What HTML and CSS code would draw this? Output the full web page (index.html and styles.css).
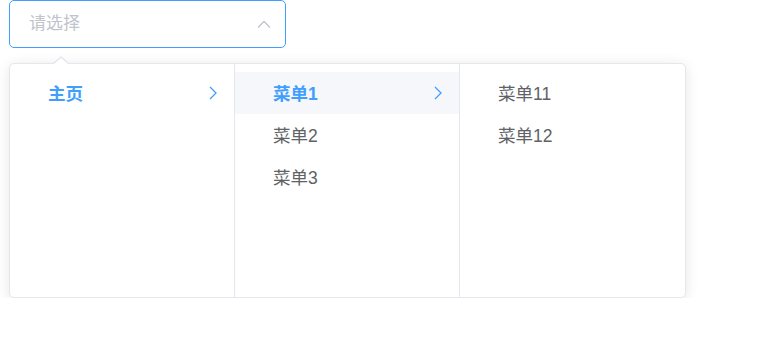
FILE: index.html
```html
<!DOCTYPE html>
<html>
  <head>
    <title>Cascader</title>
    <link rel="stylesheet" href="styles.css">
  </head>
  <body>
    <div class="cascader">
      <div class="input-wrapper">
        <input class="input" placeholder="请选择" readonly />
        <svg class="suffix" width="14" height="8" viewBox="0 0 14 8">
          <path d="M1 7.5 L7 1.5 L13 7.5" fill="none" stroke="#c0c4cc" stroke-width="1.3" />
        </svg>
      </div>

      <div class="dropdown">
        <div class="menu">
          <ul class="menu-list">
            <li class="node active">
              <span class="label">主页</span>
              <svg class="arrow" width="8" height="14" viewBox="0 0 8 14">
                <path d="M1 1 L7 7 L1 13" fill="none" stroke="#409eff" stroke-width="1.3" />
              </svg>
            </li>
          </ul>
        </div>
        <div class="menu">
          <ul class="menu-list">
            <li class="node active hover">
              <span class="label">菜单1</span>
              <svg class="arrow" width="8" height="14" viewBox="0 0 8 14">
                <path d="M1 1 L7 7 L1 13" fill="none" stroke="#409eff" stroke-width="1.3" />
              </svg>
            </li>
            <li class="node"><span class="label">菜单2</span></li>
            <li class="node"><span class="label">菜单3</span></li>
          </ul>
        </div>
        <div class="menu">
          <ul class="menu-list">
            <li class="node"><span class="label">菜单11</span></li>
            <li class="node"><span class="label">菜单12</span></li>
          </ul>
        </div>
      </div>
    </div>
  </body>
</html>
```

FILE: styles.css
```css
body {
  margin: 0;
  background: #ffffff;
  font-family: "Helvetica Neue", "Liberation Sans", "Noto Sans CJK SC", sans-serif;
}

.cascader {
  padding-left: 9px;
}

.input-wrapper {
  position: relative;
  width: 277px;
  height: 48px;
}

.input {
  box-sizing: border-box;
  width: 100%;
  height: 48px;
  padding: 0 40px 0 19px;
  border: 1px solid #409eff;
  border-radius: 5px;
  outline: none;
  font-family: inherit;
  font-size: 17px;
  color: #606266;
  background: #ffffff;
}

.input::placeholder {
  color: #c0c4cc;
}

.suffix {
  position: absolute;
  right: 15px;
  top: 20px;
}

.dropdown {
  position: relative;
  display: flex;
  width: 677px;
  height: 235px;
  margin-top: 15px;
  box-sizing: border-box;
  border: 1px solid #e4e7ed;
  border-radius: 5px;
  background: #ffffff;
  box-shadow: 0 2px 14px 0 rgba(0, 0, 0, 0.1);
}

.dropdown::before,
.dropdown::after {
  content: "";
  position: absolute;
  border-style: solid;
  border-color: transparent;
  border-top: 0;
}

.dropdown::before {
  top: -8px;
  left: 43px;
  border-width: 0 8px 7px 8px;
  border-bottom-color: #e4e7ed;
}

.dropdown::after {
  top: -6px;
  left: 44px;
  border-width: 0 7px 6px 7px;
  border-bottom-color: #ffffff;
}

.menu {
  width: 224px;
  border-right: 1px solid #e4e7ed;
}

.menu:last-child {
  border-right: 0;
  flex: 1;
}

.menu-list {
  list-style: none;
  margin: 0;
  padding: 8px 0;
}

.node {
  display: flex;
  align-items: center;
  box-sizing: border-box;
  height: 42px;
  padding: 0 17px 2px 38px;
  font-size: 17.5px;
  color: #606266;
}

.node .arrow {
  margin-top: 2px;
}

.node .label {
  flex: 1;
}

.node.active {
  color: #409eff;
  font-weight: bold;
}

.node.hover {
  background: #f5f7fa;
}
```
